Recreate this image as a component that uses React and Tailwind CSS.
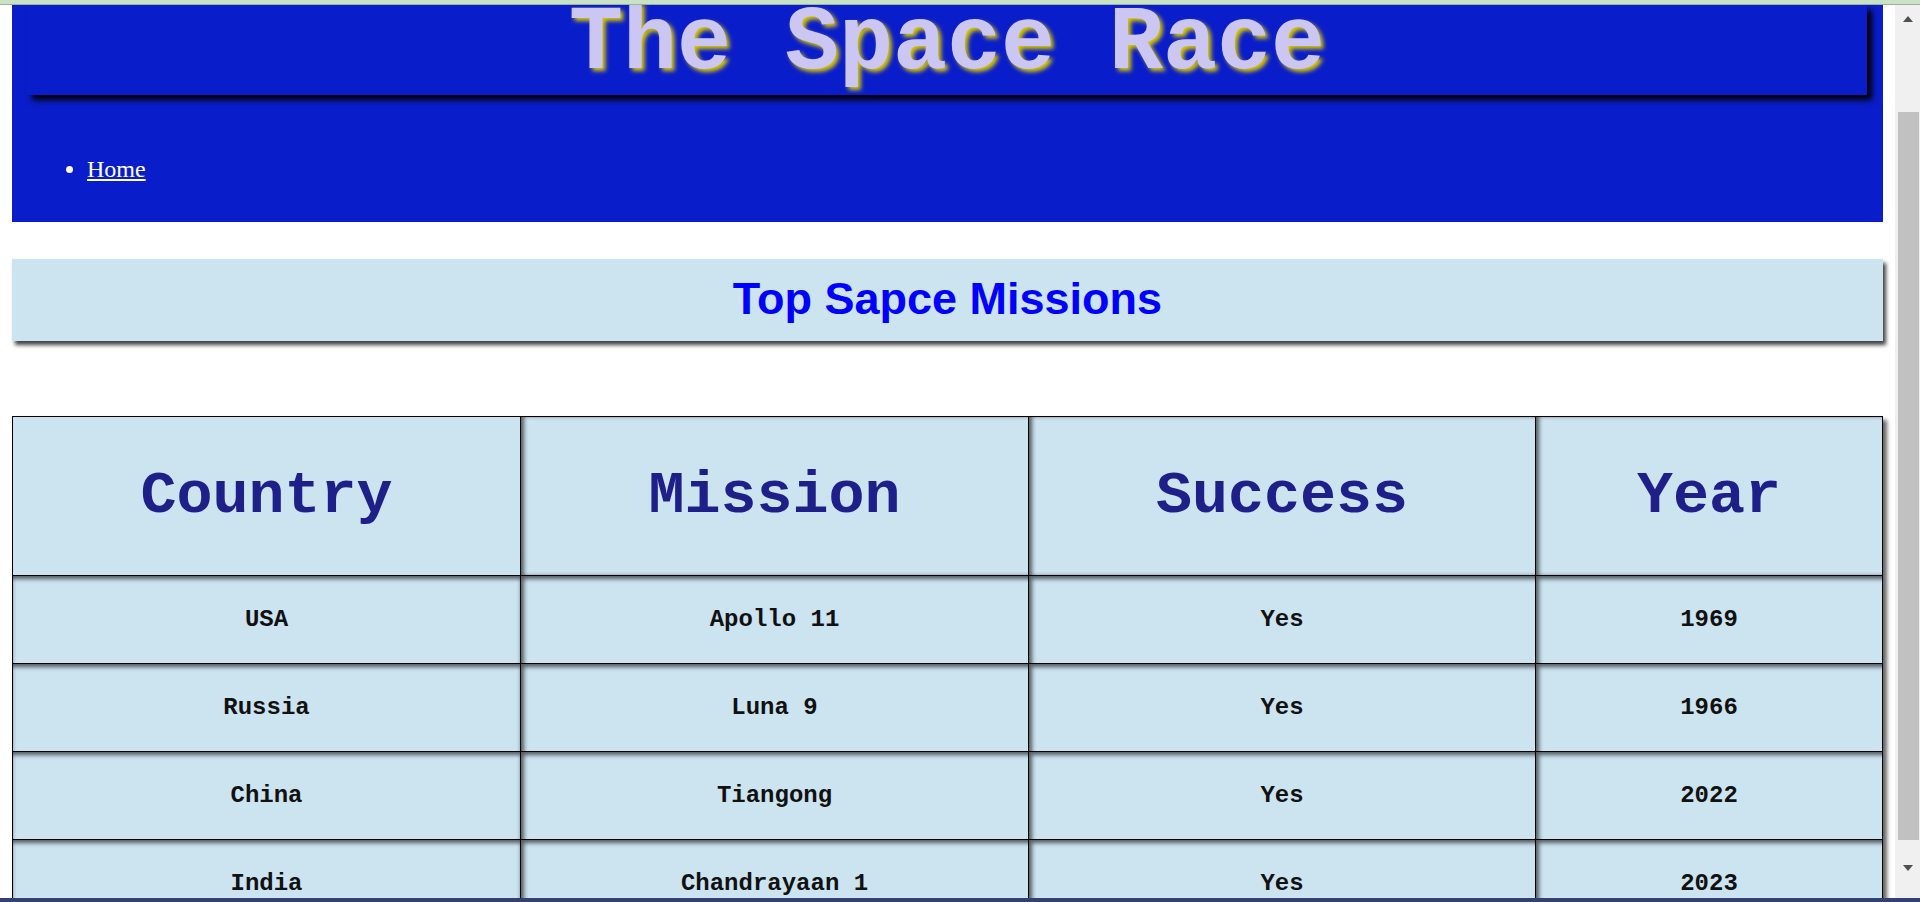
import React from 'react';

const missions = [
  { country: 'USA', mission: 'Apollo 11', success: 'Yes', year: '1969' },
  { country: 'Russia', mission: 'Luna 9', success: 'Yes', year: '1966' },
  { country: 'China', mission: 'Tiangong', success: 'Yes', year: '2022' },
  { country: 'India', mission: 'Chandrayaan 1', success: 'Yes', year: '2023' },
];

const headers = ['Country', 'Mission', 'Success', 'Year'];

const App = () => {
  return (
    <div className="h-[902px] w-[1920px] overflow-hidden flex flex-col bg-white">
      {/* browser chrome strip */}
      <div className="h-[4px] bg-[#c8e2c6] shrink-0" />
      <div className="h-px bg-[#9fb09d] shrink-0" />

      <div className="flex flex-1 min-h-0">
        {/* Page */}
        <div className="flex-1 min-w-0 overflow-hidden px-[12px]">
          {/* Header / nav */}
          <header className="h-[217px] bg-[#0a1dca] flex flex-col">
            <div className="h-[90px] ml-[15px] mr-[16px] bg-[#0a1dca] shadow-[5px_5px_6px_#000] flex items-end justify-center pb-[6px]">
              <h1 className="font-['Liberation_Mono','Courier_New',monospace] font-bold text-[90px] leading-[90px] text-[#cbc6f2] [text-shadow:3px_3px_4px_#d8c800] whitespace-pre">
                The Space Race
              </h1>
            </div>
            <ul className="mt-[60px] pl-[75px] list-disc text-white font-['Liberation_Serif','Times_New_Roman',serif] text-[24px] leading-[28px]">
              <li>
                <a href="#" className="underline text-white">Home</a>
              </li>
            </ul>
          </header>

          {/* Section title */}
          <div className="mt-[37px] h-[82px] bg-[#cce3f0] shadow-[3px_4px_4px_rgba(0,0,0,0.75)] flex items-start justify-center pt-[15px]">
            <h2 className="font-['Liberation_Sans',Arial,sans-serif] font-bold text-[45px] leading-[50px] text-[#0000ff]">
              Top Sapce Missions
            </h2>
          </div>

          {/* Missions table */}
          <table className="mt-[75px] w-full table-fixed border-collapse border border-black shadow-[4px_4px_4px_rgba(0,0,0,0.6)] font-['Liberation_Mono','Courier_New',monospace] font-bold">
            <colgroup>
              <col className="w-[508px]" />
              <col className="w-[508px]" />
              <col className="w-[507px]" />
              <col />
            </colgroup>
            <thead>
              <tr className="h-[159px]">
                {headers.map((h, i) => (
                  <th
                    key={h}
                    className={`border border-black bg-[#cce3f0] text-center align-middle text-[60px] leading-[68px] text-[#1f1f8a] font-bold ${
                      i === 0 ? '' : 'shadow-[inset_4px_0_4px_-1px_rgba(0,0,0,0.6)]'
                    }`}
                  >
                    {h}
                  </th>
                ))}
              </tr>
            </thead>
            <tbody>
              {missions.map((m) => (
                <tr key={m.country} className="h-[88px]">
                  {[m.country, m.mission, m.success, m.year].map((v, i) => (
                    <td
                      key={i}
                      className={`border border-black bg-[#cce3f0] text-center align-middle text-[24px] leading-[28px] text-[#111] ${
                        i === 0
                          ? 'shadow-[inset_0_4px_4px_-1px_rgba(0,0,0,0.6)]'
                          : 'shadow-[inset_4px_4px_4px_-1px_rgba(0,0,0,0.6)]'
                      }`}
                    >
                      {v}
                    </td>
                  ))}
                </tr>
              ))}
            </tbody>
          </table>
        </div>

        {/* Scrollbar */}
        <div className="w-[25px] shrink-0 bg-[#f0f0f0] flex flex-col items-center">
          <div className="h-[28px] flex items-center justify-center">
            <svg width="10" height="6" viewBox="0 0 10 6">
              <path d="M5 0 L10 6 L0 6 Z" fill="#505050" />
            </svg>
          </div>
          <div className="mt-[79px] ml-[2px] w-[21px] h-[728px] bg-[#c1c1c1]" />
          <div className="flex-1 flex items-center justify-center pb-[2px]">
            <svg width="10" height="6" viewBox="0 0 10 6">
              <path d="M0 0 L10 0 L5 6 Z" fill="#505050" />
            </svg>
          </div>
        </div>
      </div>

      <div className="h-[4px] bg-[#34416f] shrink-0" />
    </div>
  );
};

export default App;
